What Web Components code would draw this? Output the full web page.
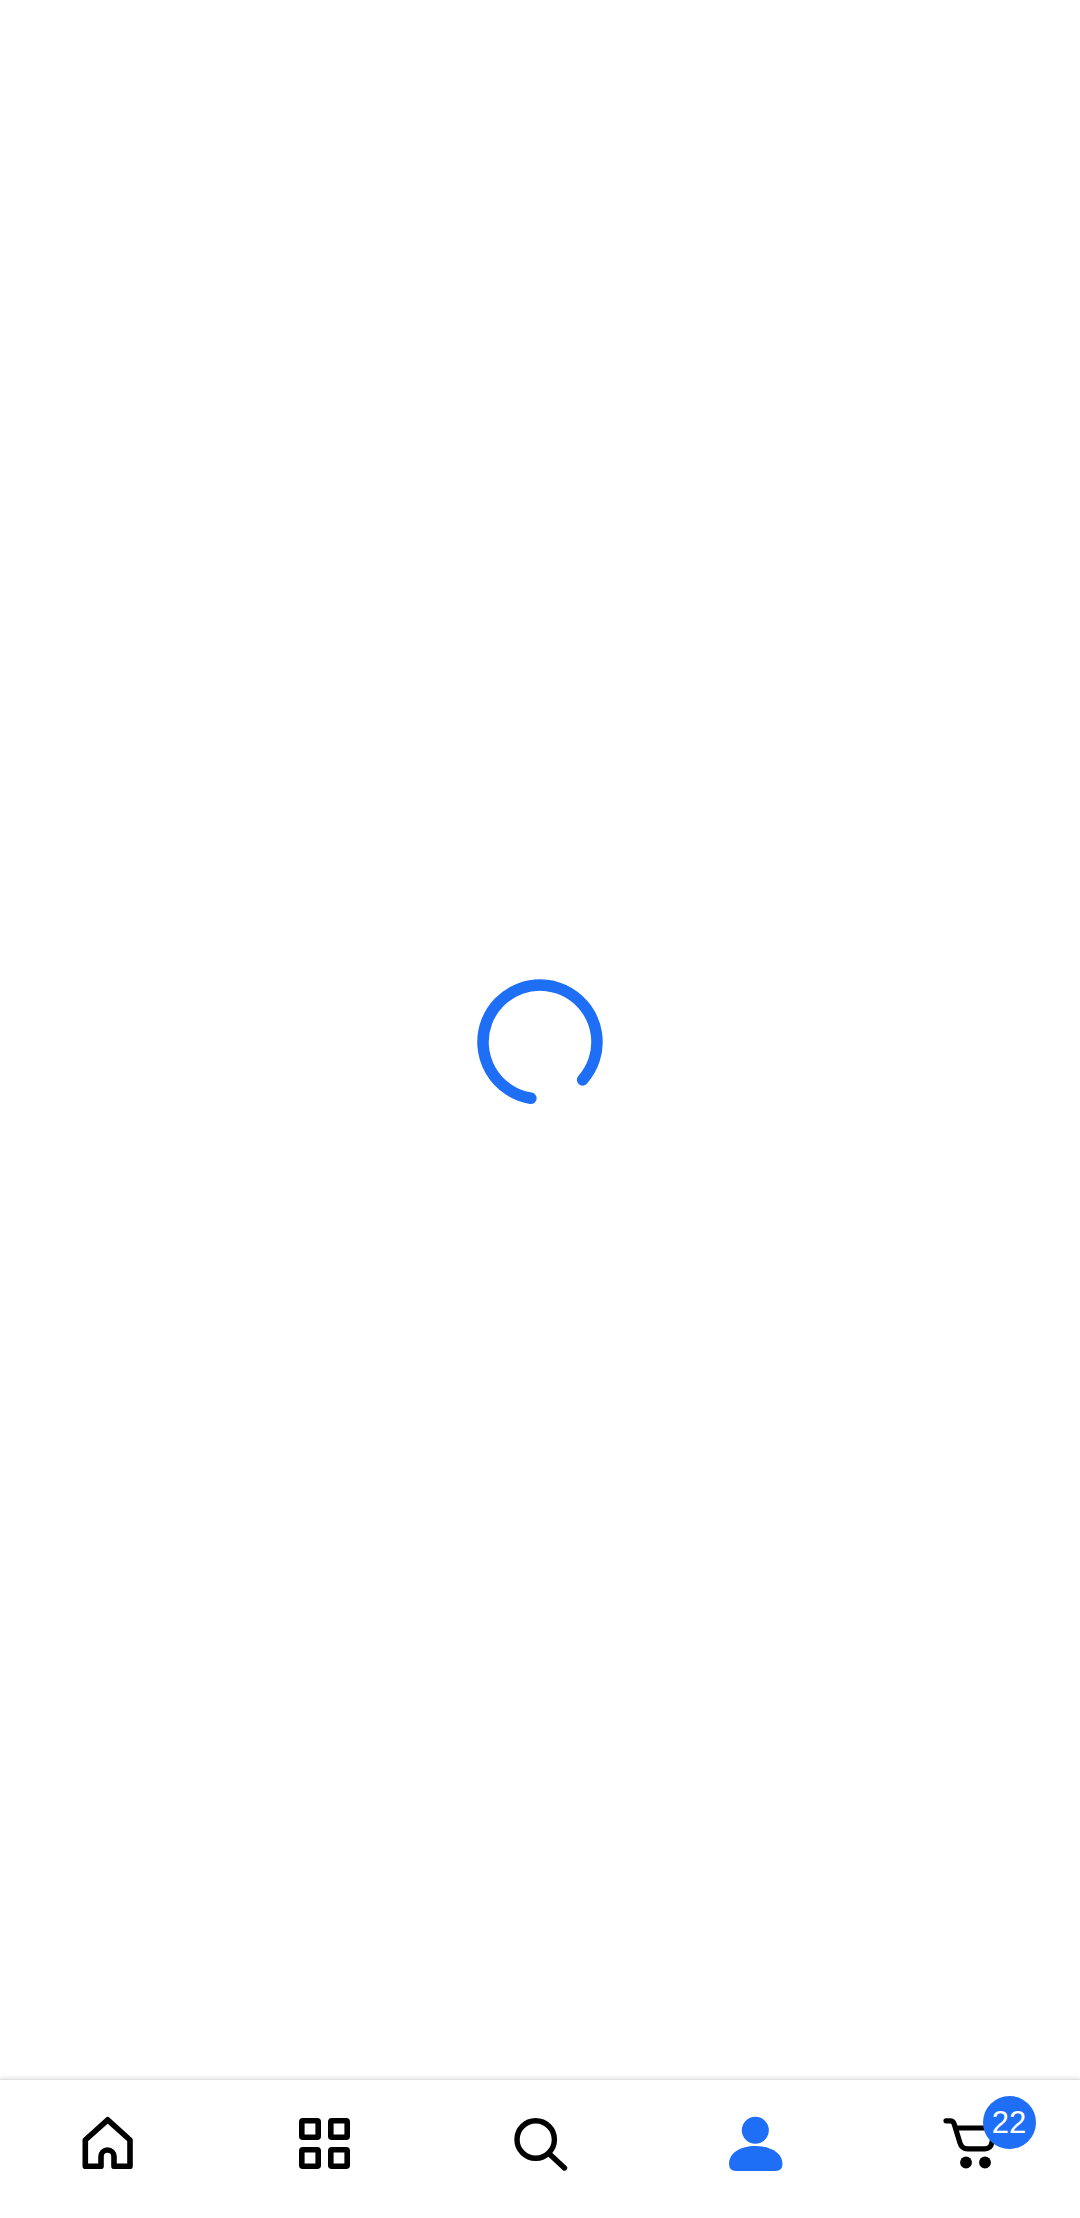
<!DOCTYPE html>
<html lang="en">
<head>
<meta charset="utf-8">
<title>Loading</title>
<style>
html,body{margin:0;padding:0;height:100%;background:#fff}
body{font-family:"Liberation Sans",Arial,sans-serif}
</style>
</head>
<body>
<app-shell>
  <loading-spinner></loading-spinner>
  <bottom-nav slot="nav">
    <nav-item icon="home" label="Home"></nav-item>
    <nav-item icon="grid" label="Categories"></nav-item>
    <nav-item icon="search" label="Search"></nav-item>
    <nav-item icon="user" label="Account" active></nav-item>
    <nav-item icon="cart" label="Cart" badge="22"></nav-item>
  </bottom-nav>
</app-shell>
<script>
const BLUE = '#1f6ff6';
const ICONS = {
  home: `<path d="M29.7 5.8 L52 26 V52.3 H36 V42.5 a6.5 6.5 0 0 0 -13 0 V52.3 H7.3 V26 Z" fill="none" stroke="currentColor" stroke-width="5.6" stroke-linejoin="round" stroke-linecap="round"/>`,
  grid: `<g fill="none" stroke="currentColor" stroke-width="5.6" stroke-linejoin="round">
    <rect x="7.8" y="6.8" width="16.4" height="16.4" rx="1"/><rect x="36.8" y="6.8" width="16.4" height="16.4" rx="1"/>
    <rect x="7.8" y="35.8" width="16.4" height="16.4" rx="1"/><rect x="36.8" y="35.8" width="16.4" height="16.4" rx="1"/></g>`,
  search: `<g fill="none" stroke="currentColor" stroke-width="5.4" stroke-linecap="round"><circle cx="25.7" cy="25.5" r="18.7"/><path d="M40 40.5 L54.5 54"/></g>`,
  user: `<circle cx="29.3" cy="16.2" r="13.5" fill="currentColor"/><path d="M29.5 32 C45 32 56.5 39 56.5 50 Q56.5 57 49.5 57 H10 Q3 57 3 50 C3 39 14 32 29.5 32 Z" fill="currentColor"/>`,
  cart: `<g fill="none" stroke="currentColor" stroke-width="5.2" stroke-linecap="round" stroke-linejoin="round"><path d="M4 6.8 H8 Q11.2 6.8 12.2 10 L18 29 Q19.8 34.8 25.5 34.8 H43 Q48.5 34.8 49.8 29 L53 14 H15"/></g><circle cx="24" cy="48.5" r="5.9" fill="currentColor"/><circle cx="43" cy="48.5" r="5.9" fill="currentColor"/>`
};

class AppShell extends HTMLElement {
  constructor(){
    super();
    this.attachShadow({mode:'open'}).innerHTML = `<style>
      :host{display:flex;flex-direction:column;height:2218px;background:#fff}
      main{flex:1;display:flex;align-items:center;justify-content:center;padding-top:4px;min-height:0}
    </style><main><slot></slot></main><slot name="nav"></slot>`;
  }
}
class LoadingSpinner extends HTMLElement {
  constructor(){
    super();
    this.attachShadow({mode:'open'}).innerHTML = `<style>
      :host{display:block;width:130px;height:130px;color:${BLUE}}
      svg{display:block}
    </style><svg width="130" height="130" viewBox="0 0 130 130" role="img" aria-label="Loading">
      <path d="M107.6 102.9 A57 57 0 1 0 55.9 121.3" fill="none" stroke="currentColor" stroke-width="11.5" stroke-linecap="round"/>
    </svg>`;
  }
}
class BottomNav extends HTMLElement {
  constructor(){
    super();
    this.attachShadow({mode:'open'}).innerHTML = `<style>
      :host{display:flex;box-sizing:border-box;height:139px;background:#fff;border-top:1px solid #e2e2e2;box-shadow:0 -1px 4px rgba(0,0,0,.12)}
    </style><slot></slot>`;
  }
}
class NavItem extends HTMLElement {
  connectedCallback(){
    if(this.shadowRoot) return;
    const icon = this.getAttribute('icon');
    const active = this.hasAttribute('active');
    const badge = this.getAttribute('badge');
    this.attachShadow({mode:'open'}).innerHTML = `<style>
      :host{flex:1;display:flex;justify-content:center;align-items:flex-start;padding-top:34px;color:${active?BLUE:'#000'}}
      .box{position:relative;width:60px;height:60px}
      svg{display:block}
      .badge{position:absolute;left:40.5px;top:-18.5px;width:53px;height:53px;border-radius:50%;background:${BLUE};color:#fff;
        display:flex;align-items:center;justify-content:center;font:400 31px/1 "Liberation Sans",Arial,sans-serif}
    </style><div class="box" title="${this.getAttribute('label')||''}">
      <svg width="60" height="60" viewBox="0 0 60 60">${ICONS[icon]}</svg>
      ${badge?`<span class="badge">${badge}</span>`:''}
    </div>`;
  }
}
customElements.define('app-shell',AppShell);
customElements.define('loading-spinner',LoadingSpinner);
customElements.define('bottom-nav',BottomNav);
customElements.define('nav-item',NavItem);
</script>
</body>
</html>
